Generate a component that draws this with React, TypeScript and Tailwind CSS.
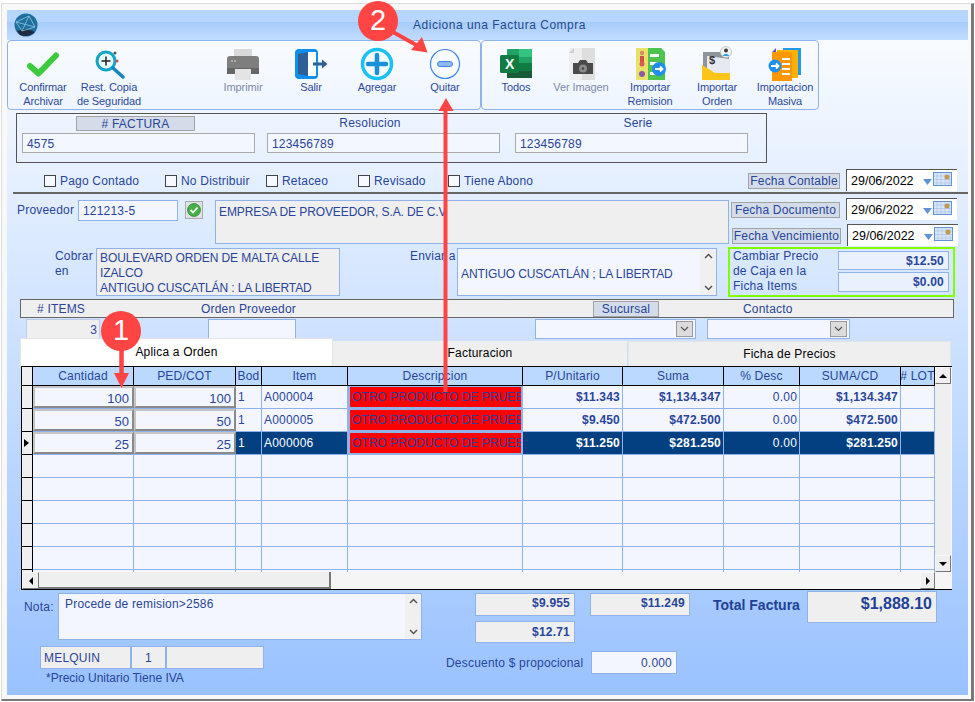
import React from "react";

const Btn = ({ ml, icon, a, b, dim }: { ml: string; icon: React.ReactNode; a: string; b?: string; dim?: boolean }) => (
  <div className={`${ml} flex h-[68px] w-[66px] shrink-0 flex-col items-center pt-[5px] text-[11px] leading-[14px] tracking-[-0.1px] ${dim ? "text-[#7d8aa8]" : "text-[#2a4a9c]"}`}>
    <div className="h-[34px] w-[36px] shrink-0">{icon}</div>
    <div className="whitespace-nowrap text-center">{a}</div>
    {b && <div className="whitespace-nowrap text-center">{b}</div>}
  </div>
);

const Svg = ({ children }: { children: React.ReactNode }) => (
  <svg viewBox="0 0 36 36" width="36" height="36">{children}</svg>
);

const IconCheck = () => (
  <Svg>
    <path d="M5 20 L13.500 27.500 L31 9.500" fill="none" stroke="#3ccb3c" strokeWidth="6" strokeLinecap="round" strokeLinejoin="round" />
  </Svg>
);
const IconRestore = () => (
  <Svg>
    <circle cx="15" cy="15" r="9" fill="#e8fbff" stroke="#12a5c8" strokeWidth="3" />
    <path d="M15 10.500 V19.500 M10.500 15 H19.500" stroke="#222" strokeWidth="1.500" />
    <path d="M22 22 L32 31" stroke="#1287c0" strokeWidth="3.500" strokeLinecap="round" />
    <circle cx="24" cy="7" r="1.500" fill="#555" />
    <circle cx="26" cy="15" r="1.500" fill="#e04848" />
  </Svg>
);
const IconPrinter = () => (
  <Svg>
    <rect x="9" y="3" width="18" height="8" fill="#d9d9d9" />
    <path d="M5 10 H31 Q34 10 34 13 V25 Q34 28 31 28 H2 V13 Q2 10 5 10 Z" fill="#7e7e7e" />
    <rect x="2" y="22" width="32" height="6" fill="#666" />
    <rect x="10" y="23" width="16" height="11" fill="#e4e4e4" />
    <circle cx="7" cy="15" r="1" fill="#bbb" />
    <circle cx="10" cy="15" r="1" fill="#bbb" />
  </Svg>
);
const IconExit = () => (
  <Svg>
    <rect x="2" y="3" width="23" height="30" rx="4" fill="#0f8ff0" />
    <rect x="15" y="6" width="8" height="24" fill="#ffffff" />
    <path d="M5 8 L15 6 V30 L5 28 Z" fill="#2e5f97" />
    <path d="M20 18 H31" stroke="#2e5f97" strokeWidth="3" />
    <path d="M29 13.500 L34.500 18 L29 22.500 Z" fill="#2e5f97" />
  </Svg>
);
const IconPlus = () => (
  <Svg>
    <circle cx="18" cy="18" r="14.500" fill="#f4fbff" stroke="#19c1f5" strokeWidth="3.500" />
    <path d="M18 9 V27 M9 18 H27" stroke="#1690d8" strokeWidth="4.500" strokeLinecap="round" />
  </Svg>
);
const IconMinus = () => (
  <Svg>
    <circle cx="18" cy="18" r="14.500" fill="#f8fbff" stroke="#3e85ee" strokeWidth="1.200" />
    <rect x="10.500" y="15.500" width="15" height="5" rx="2.500" fill="#8fb8ee" stroke="#3e85ee" strokeWidth="1" />
  </Svg>
);
const IconExcel = () => (
  <Svg>
    <rect x="9" y="3" width="25" height="29" rx="1" fill="#21a366" />
    <rect x="21" y="3" width="13" height="8" fill="#33c481" />
    <rect x="21" y="17" width="13" height="8" fill="#107c41" />
    <rect x="9" y="25" width="25" height="7" fill="#185c37" />
    <rect x="2" y="9" width="19" height="18" rx="1.500" fill="#107c41" />
    <text x="11.500" y="23" fontSize="14" fontWeight="700" fill="#fff" textAnchor="middle" fontFamily="Liberation Sans, sans-serif">X</text>
  </Svg>
);
const IconCamera = () => (
  <Svg>
    <path d="M6 2 H32 V34 H6 V7 Z" fill="#eeeeee" />
    <rect x="19" y="2" width="13" height="32" fill="#dedede" />
    <path d="M6 7 L11 2 V7 Z" fill="#cfcfcf" />
    <path d="M10 17 H15 L17 14 H23 L25 17 H30 V28 H10 Z" fill="#4a4a4a" />
    <circle cx="20" cy="22.500" r="4" fill="#8a8a8a" />
    <circle cx="20" cy="22.500" r="1.300" fill="#4a4a4a" />
  </Svg>
);
const IconRemision = () => (
  <Svg>
    <rect x="4" y="2" width="12" height="32" fill="#e8e26a" />
    <path d="M16 2 H29 L33 6 V34 H16 Z" fill="#4fc34f" />
    <circle cx="10" cy="7" r="2.200" fill="#d98a6a" />
    <rect x="8" y="10" width="4" height="6" fill="#d64f4f" />
    <circle cx="10" cy="18" r="2.500" fill="#d85a5a" />
    <circle cx="10" cy="28" r="3" fill="#8a5aa8" />
    <rect x="18" y="8" width="9" height="3" fill="#fff" />
    <rect x="18" y="16" width="9" height="3" fill="#fff" />
    <rect x="18" y="26" width="9" height="3" fill="#fff" />
    <circle cx="27" cy="23" r="7" fill="#1f8fee" />
    <path d="M23 23 H30 M28 20.500 L30.500 23 L28 25.500" fill="none" stroke="#fff" strokeWidth="1.800" />
  </Svg>
);
const IconOrden = () => (
  <Svg>
    <rect x="4" y="6" width="26" height="18" fill="#8e959d" />
    <path d="M8 10 L31 13 V30 H8 Z" fill="#e6eaf0" />
    <text x="10" y="18" fontSize="11" fontWeight="700" fill="#333" fontFamily="Liberation Sans, sans-serif">$</text>
    <path d="M3 19 L16 27 H31 V34 H3 Z" fill="#fcc419" />
    <circle cx="27" cy="6" r="5.500" fill="#f2f2f2" stroke="#bbb" strokeWidth="0.800" />
    <circle cx="27" cy="4.500" r="2" fill="#3a3a3a" />
    <path d="M23.500 10 Q27 5.500 30.500 10 Z" fill="#2f9fe8" />
  </Svg>
);
const IconMasiva = () => (
  <Svg>
    <rect x="16" y="2" width="18" height="27" fill="#1f9aea" />
    <rect x="10" y="4" width="21" height="28" fill="#ffb000" />
    <rect x="5" y="6" width="20" height="29" fill="#ff9800" />
    <path d="M5 6 L9 2 V6 Z" fill="#6a55c0" />
    <rect x="15" y="12" width="8" height="2" fill="#fff" />
    <rect x="15" y="17" width="8" height="2" fill="#fff" />
    <rect x="15" y="22" width="8" height="2" fill="#fff" />
    <rect x="15" y="27" width="8" height="2" fill="#fff" />
    <circle cx="8" cy="20" r="6.500" fill="#1f8fee" />
    <path d="M4 20 H11 M9 17.500 L11.500 20 L9 22.500" fill="none" stroke="#fff" strokeWidth="1.800" />
  </Svg>
);

const DatePicker = ({ cls }: { cls: string }) => (
  <div className={`${cls} flex h-[22px] w-[111px] shrink-0 items-center bg-white border-l border-t border-[#555] text-[12.5px] tracking-normal text-black`}>
    <span className="ml-[4px] w-[70px] pt-[2px]">29/06/2022</span>
    <svg width="9" height="6" viewBox="0 0 9 6" className="ml-[2px] mt-[2px]"><path d="M0 0 H9 L4.500 6 Z" fill="#5f95d8" /></svg>
    <svg width="19" height="14" viewBox="0 0 19 14" className="ml-px mb-[3px]">
      <rect x="0.500" y="0.500" width="18" height="13" fill="#dbe6f8" stroke="#5f95d8" />
      <path d="M4 1 V13 M8 1 V13 M12 1 V13 M16 1 V13 M1 4 H18 M1 7.500 H18 M1 11 H18" stroke="#a9c3ea" strokeWidth="0.700" />
      <circle cx="14" cy="5" r="2.500" fill="#c09a4a" />
    </svg>
  </div>
);

const Chip = ({ cls, children }: { cls: string; children: React.ReactNode }) => (
  <div className={`${cls} flex shrink-0 items-center justify-center border border-[#a3a3a3] bg-[#d3dce8] leading-none`}>{children}</div>
);

const Check = ({ cls, label }: { cls: string; label: string }) => (
  <div className={`${cls} mt-[2px] flex shrink-0 items-center`}>
    <span className="h-[12px] w-[12px] border border-[#444] bg-[#f6f9ff]" />
    <span className="ml-[4px]">{label}</span>
  </div>
);

const UpDown = ({ cls }: { cls: string }) => (
  <div className={`${cls} flex shrink-0 flex-col items-center justify-between bg-[#f0f0f0] py-[4px]`}>
    <svg width="9" height="6" viewBox="0 0 9 6"><path d="M1 5 L4.500 1.500 L8 5" fill="none" stroke="#555" strokeWidth="1.500" /></svg>
    <svg width="9" height="6" viewBox="0 0 9 6"><path d="M1 1 L4.500 4.500 L8 1" fill="none" stroke="#555" strokeWidth="1.500" /></svg>
  </div>
);

const SelectBox = ({ cls }: { cls: string }) => (
  <div className={`${cls} flex h-[20px] shrink-0 items-center justify-end border border-[#8fb3e8] bg-[#f3f6ff] pr-[2px]`}>
    <div className="flex h-[16px] w-[17px] items-center justify-center border border-[#999] bg-[#dcdcdc]">
      <svg width="9" height="6" viewBox="0 0 9 6"><path d="M1 1 L4.500 4.500 L8 1" fill="none" stroke="#555" strokeWidth="1.200" /></svg>
    </div>
  </div>
);

const cols = "grid grid-cols-[11px_101px_102px_26px_86px_175px_100px_101px_76px_101px_34px]";

const rows = [
  ["100", "100", "1", "A000004", "$11.343", "$1,134.347", "0.00", "$1,134.347"],
  ["50", "50", "1", "A000005", "$9.450", "$472.500", "0.00", "$472.500"],
  ["25", "25", "1", "A000006", "$11.250", "$281.250", "0.00", "$281.250"],
];

const headers = ["Cantidad", "PED/COT", "Bod", "Item", "Descripcion", "P/Unitario", "Suma", "% Desc", "SUMA/CD", "# LOT"];

const DataRow = ({ r, sel }: { r: string[]; sel: boolean }) => {
  const c = sel ? "bg-[#024082] text-white" : "bg-[#f3f6ff]";
  const cell = `${c} flex items-center border-r border-b border-[#8fb3e8] overflow-hidden whitespace-nowrap leading-none`;
  const raised = "flex items-center justify-end border-2 border-[#8a8a8a] border-t-[#c4c4c4] border-l-[#c4c4c4] bg-[#f3f6ff] pr-[3px] pt-[3px] text-[13px] leading-none tracking-normal mb-px";
  return (
    <div className={`${cols} h-[23px] grid-rows-[23px] bg-[#8fb3e8]`}>
      <div className="flex items-center border-r border-b border-black bg-[#efefef] pl-[2px]">
        {sel && <svg width="5" height="8" viewBox="0 0 5 8"><path d="M0 0 L5 4 L0 8 Z" fill="#000" /></svg>}
      </div>
      <div className={raised}>{r[0]}</div>
      <div className={raised}>{r[1]}</div>
      <div className={`${cell} pl-[2px]`}>{r[2]}</div>
      <div className={`${cell} pl-[2px]`}>{r[3]}</div>
      <div className="flex items-center overflow-hidden whitespace-nowrap bg-[#8fb3e8] pb-[2px] pl-[2px] pr-[2px] pt-px leading-none">
        <div className="flex h-full w-full items-center overflow-hidden bg-[#ff0000] pl-[2px] tracking-normal text-[#2b3f9e]">OTRO PRODUCTO DE PRUEBA</div>
      </div>
      <div className={`${cell} justify-end pr-[2px] font-bold`}>{r[4]}</div>
      <div className={`${cell} justify-end pr-[2px] font-bold`}>{r[5]}</div>
      <div className={`${cell} justify-end pr-[2px]`}>{r[6]}</div>
      <div className={`${cell} justify-end pr-[2px] font-bold`}>{r[7]}</div>
      <div className={cell} />
    </div>
  );
};

const EmptyRow = () => (
  <div className={`${cols} h-[23px]`}>
    <div className="border-r border-b border-black bg-[#efefef]" />
    {Array.from({ length: 10 }).map((_, i) => (
      <div key={i} className="border-r border-b border-[#8fb3e8] bg-[#f3f6ff]" />
    ))}
  </div>
);

const ScrollBtn = ({ cls, d }: { cls: string; d: string }) => (
  <div className={`${cls} flex shrink-0 items-center justify-center border border-[#f8f8f8] border-r-[#777] border-b-[#777] bg-[#efefef]`}>
    <svg width="8" height="8" viewBox="0 0 8 8"><path d={d} fill="#000" /></svg>
  </div>
);

export default function App() {
  return (
    <div className="relative h-[702px] w-[975px] overflow-hidden bg-white font-['Liberation_Sans',Arial,sans-serif] text-[12px] tracking-[0.2px] text-[#28459b]">
      <div className="ml-[1px] mt-[3px] h-[698px] w-[973px] border-l border-t border-[#dddddd] border-r-[3px] border-b-[2px] border-r-[#7a7a7a] border-b-[#7a7a7a] bg-[#f8f8f8] pl-[5px] pt-[6px]">
        <div className="flex h-[685px] w-[961px] flex-col bg-[linear-gradient(180deg,#f9fbff_0%,#f8fbff_5%,#99c2ff_100%)]">
          {/* title */}
          <div className="relative flex h-[30px] shrink-0 items-center justify-center bg-[linear-gradient(180deg,#b6d6ff_0%,#b6d6ff_40%,#a6cbfc_40%,#c2dcff_100%)] text-[12px] tracking-[0.5px] text-[#1f4a8c]">
            <svg width="24" height="24" viewBox="0 0 24 24" className="absolute left-[7px] top-[3px]">
              <circle cx="12" cy="12" r="11.500" fill="#1f6f9e" />
              <path d="M3 18 Q12 14 21 19 Q14 25 6 22 Z" fill="#1f2a44" />
              <path d="M2 9 L15 3 L21 14 L8 18 Z M15 3 L8 18 M2 9 L21 14" fill="none" stroke="#9fd3ea" strokeWidth="0.700" />
            </svg>
            <span className="ml-[24px]">Adiciona una Factura Compra</span>
          </div>
          {/* toolbar */}
          <div className="flex h-[70px] shrink-0">
            <div className="flex h-[70px] w-[474px] shrink-0 rounded-[4px] border border-[#8fb3e8]">
              <Btn ml="ml-[2px]" icon={<IconCheck />} a="Confirmar" b="Archivar" />
              <Btn ml="ml-0" icon={<IconRestore />} a="Rest. Copia" b="de Seguridad" />
              <Btn ml="ml-[68px]" icon={<IconPrinter />} a="Imprimir" dim />
              <Btn ml="ml-[2px]" icon={<IconExit />} a="Salir" />
              <Btn ml="ml-0" icon={<IconPlus />} a="Agregar" />
              <Btn ml="ml-[2px]" icon={<IconMinus />} a="Quitar" />
            </div>
            <div className="flex h-[70px] w-[338px] shrink-0 rounded-[4px] border border-[#8fb3e8]">
              <Btn ml="ml-[1px]" icon={<IconExcel />} a="Todos" />
              <Btn ml="-ml-[1px]" icon={<IconCamera />} a="Ver Imagen" dim />
              <Btn ml="ml-[3px]" icon={<IconRemision />} a="Importar" b="Remision" />
              <Btn ml="ml-[1px]" icon={<IconOrden />} a="Importar" b="Orden" />
              <Btn ml="ml-[2px]" icon={<IconMasiva />} a="Importacion" b="Masiva" />
            </div>
          </div>
          {/* factura box */}
          <div className="ml-[9px] mt-[3px] flex h-[50px] w-[751px] shrink-0 border border-[#555] pl-[5px]">
            <div className="flex w-[233px] shrink-0 flex-col items-center">
              <Chip cls="mr-[6px] mt-[2px] mb-[2px] h-[15px] w-[119px]">
                # FACTURA
              </Chip>
              <div className="flex h-[20px] w-full items-center border border-[#aaaaaa] bg-[#f3f7ff] pl-[4px] pt-[2px]">4575</div>
            </div>
            <div className="ml-[12px] flex w-[233px] shrink-0 flex-col items-center">
              <div className="mr-[27px] flex h-[19px] items-center pb-[2px]">Resolucion</div>
              <div className="flex h-[20px] w-full items-center border border-[#aaaaaa] bg-[#f3f7ff] pl-[4px] pt-[2px]">123456789</div>
            </div>
            <div className="ml-[15px] flex w-[233px] shrink-0 flex-col items-center">
              <div className="ml-[13px] flex h-[19px] items-center pb-[2px]">Serie</div>
              <div className="flex h-[20px] w-full items-center border border-[#aaaaaa] bg-[#f3f7ff] pl-[4px] pt-[2px]">123456789</div>
            </div>
          </div>
          {/* checks */}
          <div className="mt-[6px] flex h-[22px] shrink-0 items-center pl-[37px]">
            <Check cls="w-[121px]" label="Pago Contado" />
            <Check cls="w-[101px]" label="No Distribuir" />
            <Check cls="w-[92px]" label="Retaceo" />
            <Check cls="w-[90px]" label="Revisado" />
            <Check cls="w-[300px]" label="Tiene Abono" />
            <Chip cls="mt-[2px] h-[16px] w-[92px]">Fecha Contable</Chip>
            <DatePicker cls="ml-[6px]" />
          </div>
          <div className="ml-[6px] mt-[1px] h-[2px] w-[955px] shrink-0 bg-[#666666]" />
          {/* proveedor */}
          <div className="flex h-[52px] shrink-0">
            <div className="ml-[10px] mt-[7px] w-[61px] shrink-0">Proveedor</div>
            <div className="mt-[6px] flex h-[21px] w-[100px] shrink-0 items-center border border-[#8fb3e8] bg-[#f3f6ff] pl-[4px]">121213-5</div>
            <div className="ml-[7px] mt-[7px] flex h-[18px] w-[18px] shrink-0 items-center justify-center border border-[#aaa] bg-[#dfe3e8]">
              <svg width="14" height="14" viewBox="0 0 14 14">
                <circle cx="7" cy="7" r="6.500" fill="#46b046" stroke="#2c7f2c" strokeWidth="0.700" />
                <path d="M3.500 7 L6 9.500 L10.500 4.500" fill="none" stroke="#fff" strokeWidth="1.800" />
              </svg>
            </div>
            <div className="ml-[12px] mt-[6px] h-[44px] w-[514px] shrink-0 border border-[#8fb3e8] bg-[#efefef] pl-[3px] pt-[2px] tracking-[-0.1px]">EMPRESA DE PROVEEDOR, S.A. DE C.V</div>
            <div className="ml-[2px] flex flex-col">
              <div className="mt-[4px] flex items-center">
                <Chip cls="mt-[2px] h-[16px] w-[109px]">Fecha Documento</Chip>
                <DatePicker cls="ml-[6px]" />
              </div>
              <div className="ml-[1px] mt-[4px] flex items-center">
                <Chip cls="mt-[2px] h-[16px] w-[109px]">Fecha Vencimiento</Chip>
                <DatePicker cls="ml-[6px]" />
              </div>
            </div>
          </div>
          {/* cobrar */}
          <div className="mt-[1px] flex h-[50px] shrink-0">
            <div className="ml-[48px] mt-[2px] w-[41px] shrink-0 leading-[15px]">Cobrar en</div>
            <div className="mt-[1px] h-[48px] w-[244px] shrink-0 border border-[#8fb3e8] bg-[#efefef] pl-[3px] pt-[2px] leading-[15px] tracking-[-0.1px]">
              BOULEVARD ORDEN DE MALTA CALLE IZALCO
              <br />
              ANTIGUO CUSCATLÁN : LA LIBERTAD
            </div>
            <div className="ml-[70px] mt-[2px] w-[47px] shrink-0 leading-[15px]">Enviar a</div>
            <div className="mt-[1px] flex h-[48px] w-[260px] shrink-0 items-center border border-[#8fb3e8] bg-[#f3f6ff] pl-[3px]">
              <span className="flex-1 pt-[3px] tracking-[-0.1px]">ANTIGUO CUSCATLÁN ; LA LIBERTAD</span>
              <UpDown cls="h-full w-[16px]" />
            </div>
            <div className="ml-[11px] flex h-[50px] w-[227px] shrink-0 border-2 border-[#7fff00] pl-[3px]">
              <div className="w-[105px] shrink-0 leading-[15px]">
                Cambiar Precio
                <br />
                de Caja en la
                <br />
                Ficha Items
              </div>
              <div className="flex flex-col">
                <div className="mt-[2px] flex h-[19px] w-[111px] items-center justify-end border border-[#8fb3e8] bg-[#e9f1ff] pr-[4px] font-bold">$12.50</div>
                <div className="mt-[2px] flex h-[20px] w-[111px] items-center justify-end border border-[#8fb3e8] bg-[#e9f1ff] pr-[4px] font-bold">$0.00</div>
              </div>
            </div>
          </div>
          {/* band */}
          <div className="ml-[13px] mt-[2px] flex h-[19px] w-[934px] shrink-0 items-center border border-[#666] bg-[#efefef]">
            <span className="ml-[16px] w-[164px] shrink-0">
              # ITEMS
            </span>
            <span className="w-[392px] shrink-0">Orden Proveedor</span>
            <Chip cls="h-[16px] w-[66px]">Sucursal</Chip>
            <span className="ml-[84px]">Contacto</span>
          </div>
          <div className="mt-[1px] flex h-[20px] shrink-0">
            <div className="ml-[19px] flex w-[74px] shrink-0 items-center justify-end border border-[#b9cde8] bg-[#efefef] pr-[2px] pt-[2px]">3</div>
            <div className="ml-[108px] w-[88px] shrink-0 border border-[#8fb3e8] bg-[#f3f6ff]" />
            <SelectBox cls="ml-[239px] w-[161px]" />
            <SelectBox cls="ml-[11px] w-[143px]" />
          </div>
          {/* tabs */}
          <div className="-mt-[1px] ml-[13px] flex h-[28px] shrink-0 items-end text-black">
            <div className="flex h-[28px] w-[313px] shrink-0 items-center justify-center border border-[#e4e4e4] border-b-0 bg-white pb-[2px]">Aplica a Orden</div>
            <div className="flex h-[25px] w-[294px] shrink-0 items-center justify-center bg-[#efefef] pb-px">Facturacion</div>
            <div className="ml-[1px] flex h-[25px] w-[323px] shrink-0 items-center justify-center border border-[#e4e4e4] border-b-0 bg-[#efefef] pb-px">Ficha de Precios</div>
          </div>
          {/* grid */}
          <div className="ml-[14px] h-[224px] w-[931px] shrink-0 border-l border-t border-b border-black bg-[#f3f6ff]">
            <div className="flex h-[205px]">
              <div className="h-[205px] w-[913px] shrink-0 overflow-hidden">
                <div className={`${cols} h-[19px]`}>
                  <div className="border-r border-b border-black bg-[#efefef]" />
                  {headers.map((h) => (
                    <div key={h} className="flex items-center justify-center overflow-hidden whitespace-nowrap border-r border-b border-black bg-[#bbd9ff] leading-none">{h}</div>
                  ))}
                </div>
                {rows.map((r, i) => (
                  <DataRow key={i} r={r} sel={i === 2} />
                ))}
                <EmptyRow />
                <EmptyRow />
                <EmptyRow />
                <EmptyRow />
                <EmptyRow />
                <EmptyRow />
              </div>
              <div className="flex h-[205px] w-[16px] shrink-0 flex-col justify-between bg-[#efefef]">
                <ScrollBtn cls="h-[17px] w-[16px]" d="M0 6 L8 6 L4 2 Z" />
                <ScrollBtn cls="h-[17px] w-[16px]" d="M0 2 L8 2 L4 6 Z" />
              </div>
            </div>
            <div className="flex h-[17px] w-[929px] bg-[#f5f5f5]">
              <ScrollBtn cls="h-[17px] w-[17px]" d="M6 0 L6 8 L2 4 Z" />
              <div className="h-[17px] w-[292px] shrink-0 border-r-2 border-b-2 border-[#777] bg-[#efefef]" />
              <div className="w-[589px] shrink-0" />
              <ScrollBtn cls="h-[17px] w-[15px]" d="M2 0 L2 8 L6 4 Z" />
            </div>
          </div>
          {/* bottom */}
          <div className="flex flex-1">
            <div className="w-[415px] shrink-0">
              <div className="mt-[3px] flex">
                <div className="ml-[17px] w-[34px] shrink-0 pt-[5px]">Nota:</div>
                <div className="flex h-[47px] w-[364px] shrink-0 border border-[#8fb3e8] bg-[#f3f6ff]">
                  <div className="flex-1 pl-[6px] pt-px">Procede de remision&gt;2586</div>
                  <UpDown cls="h-full w-[16px]" />
                </div>
              </div>
              <div className="ml-[33px] mt-[6px] flex h-[23px]">
                <div className="flex w-[91px] items-center border border-[#8fb3e8] bg-[#efefef] pl-[3px]">MELQUIN</div>
                <div className="flex w-[35px] items-center justify-center border border-[#8fb3e8] bg-[#efefef]">1</div>
                <div className="w-[98px] border border-[#8fb3e8] bg-[#efefef]" />
              </div>
              <div className="ml-[39px] mt-[2px] leading-[15px] tracking-normal">*Precio Unitario Tiene IVA</div>
            </div>
            <div className="flex flex-col">
              <div className="mt-px flex h-[52px]">
                <div className="ml-[53px] flex w-[100px] shrink-0 flex-col">
                  <div className="mt-[2px] flex h-[23px] items-center justify-end border border-[#8fb3e8] bg-[#efefef] pb-[3px] pr-[4px] font-bold">$9.955</div>
                  <div className="mt-[5px] flex h-[22px] items-center justify-end border border-[#8fb3e8] bg-[#efefef] pr-[4px] font-bold">$12.71</div>
                </div>
                <div className="ml-[15px] mt-[2px] flex h-[23px] w-[100px] shrink-0 items-center justify-end border border-[#8fb3e8] bg-[#efefef] pb-[3px] pr-[4px] font-bold">$11.249</div>
                <div className="ml-[23px] mt-[4px] w-[94px] shrink-0 text-[14px] font-bold tracking-normal text-[#1f4296]">Total Factura</div>
                <div className="h-[32px] w-[130px] shrink-0 border border-[#8fb3e8] bg-[#efefef] pr-[4px] text-right text-[16px] font-bold tracking-normal text-[#1f4296]">$1,888.10</div>
              </div>
              <div className="mt-[8px] flex h-[23px]">
                <div className="ml-[24px] flex w-[145px] shrink-0 items-center">Descuento $ propocional</div>
                <div className="flex w-[86px] shrink-0 items-center justify-end border border-[#8fb3e8] bg-[#f3f6ff] pr-[4px]">0.000</div>
              </div>
            </div>
          </div>
        </div>
      </div>

      {/* callouts */}
      <svg className="pointer-events-none absolute left-0 top-0" width="975" height="702" viewBox="0 0 975 702">
        <path d="M445.500 392 V108" stroke="#ff4444" strokeWidth="4" />
        <path d="M446 98 L453.500 111 L438.500 111 Z" fill="#ff4444" />
        <path d="M121.500 345 V375" stroke="#ff4444" strokeWidth="4.500" />
        <path d="M121.500 388 L114 373 L129 373 Z" fill="#ff4444" />
        <path d="M393 32 L418 46" stroke="#ff4444" strokeWidth="4" />
        <path d="M427.500 52.500 L411 50 L422 37 Z" fill="#ff4444" />
      </svg>
      <div className="absolute left-[101px] top-[311px] flex h-[40px] w-[40px] items-center justify-center rounded-full bg-[#ff4444] text-[29px] tracking-normal text-white">1</div>
      <div className="absolute left-[358px] top-[1px] flex h-[40px] w-[40px] items-center justify-center rounded-full bg-[#ff4444] text-[29px] tracking-normal text-white">2</div>
    </div>
  );
}
